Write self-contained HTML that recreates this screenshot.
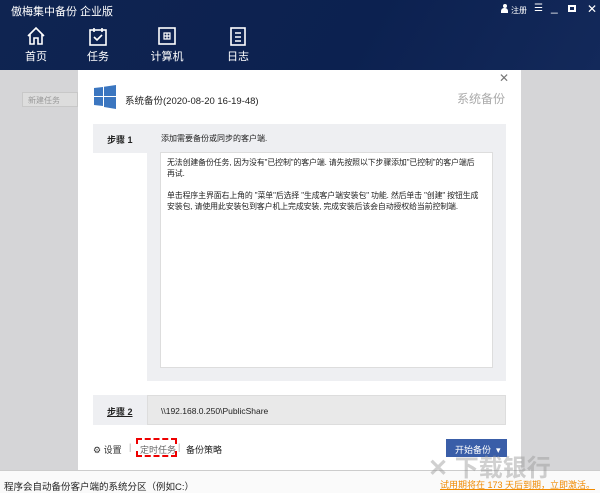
<!DOCTYPE html>
<html><head><meta charset="utf-8"><style>
*{margin:0;padding:0;box-sizing:border-box}
body{width:600px;height:493px;overflow:hidden;position:relative;background:#d5d5d7;font-family:"Liberation Sans","Noto Sans CJK SC",sans-serif;font-size:9px;color:#222}
.hdr{position:absolute;left:0;top:0;width:600px;height:70px;background:linear-gradient(120deg,#0f2451,#0c2150 60%,#13295a)}
.title{position:absolute;left:11px;top:3px;color:#fff;font-size:11px}
.nav{position:absolute;top:26px;color:#fff;font-size:11px;text-align:center;width:40px}
.nav svg{display:block;margin:0 auto 2px}
.dlg{position:absolute;left:78px;top:70px;width:443px;height:400px;background:#fff}
.status{position:absolute;left:0;top:470px;width:600px;height:23px;background:#fafafa;border-top:1px solid #ccc;font-size:9.5px;padding:8px 0 0 4px}
</style></head><body>
<div class="hdr">
<div class="title">傲梅集中备份 企业版</div>
<div style="position:absolute;right:0;top:4px;color:#fff;font-size:8px">
<span style="position:absolute;left:-99px;top:0;width:7px;height:9px"><span style="position:absolute;left:1.5px;top:0;width:4px;height:4px;border-radius:50%;background:#fff"></span><span style="position:absolute;left:0;top:4px;width:7px;height:5px;background:#fff;border-radius:3px 3px 0 0"></span></span>
<span style="position:absolute;left:-89px;top:1px">注册</span>
<span style="position:absolute;left:-66px;top:-1px;font-size:10px">☰</span>
<span style="position:absolute;left:-49px;top:-4px;font-size:12px">_</span>
<span style="position:absolute;left:-32px;top:1px;width:8px;height:7px;border:2px solid #fff"></span>
<span style="position:absolute;left:-13px;top:-2px;font-size:12px">✕</span>
</div>
<div class="nav" style="left:16px"><svg width="20" height="20" viewBox="0 0 20 20" fill="none" stroke="#fff" stroke-width="1.6"><path d="M2 10L10 2L18 10M4 8V18H8V12H12V18H16V8"/></svg>首页</div>
<div class="nav" style="left:78px"><svg width="20" height="20" viewBox="0 0 20 20" fill="none" stroke="#fff" stroke-width="1.6"><rect x="2" y="4" width="16" height="15"/><path d="M6 2V6M14 2V6M6 11L9 14L14 9"/></svg>任务</div>
<div class="nav" style="left:147px"><svg width="20" height="20" viewBox="0 0 20 20" fill="none" stroke="#fff" stroke-width="1.6"><rect x="2" y="2" width="16" height="16"/><path d="M7 7h6v6H7zM10 7v6M7 10h6" stroke-width="1.2"/></svg>计算机</div>
<div class="nav" style="left:218px"><svg width="20" height="20" viewBox="0 0 20 20" fill="none" stroke="#fff" stroke-width="1.6"><rect x="3" y="2" width="14" height="17"/><path d="M7 7h6M7 11h6M7 15h6"/></svg>日志</div>
</div>
<div style="position:absolute;left:22px;top:92px;width:56px;height:15px;border:1px solid #c8c8c8;background:#ddd;color:#999;font-size:8px;padding:2px 5px">新建任务</div>
<div class="dlg">
<div style="position:absolute;right:12px;top:1px;color:#777;font-size:12px">✕</div>
<svg style="position:absolute;left:16px;top:15px" width="22" height="24" viewBox="0 0 22 24"><path d="M0 3L9 2V11H0ZM10 1.8L22 0V11H10ZM0 12H9V21L0 20ZM10 12H22V24L10 22Z" fill="#3b76c0"/></svg>
<div style="position:absolute;left:47px;top:23px;font-size:9.5px">系统备份(2020-08-20 16-19-48)</div>
<div style="position:absolute;right:16px;top:20px;font-size:12px;color:#aaa">系统备份</div>
<div style="position:absolute;left:15px;top:54px;width:413px;height:29px;background:#eeeff2"></div>
<div style="position:absolute;left:69px;top:83px;width:359px;height:228px;background:#eeeff2"></div>
<div style="position:absolute;left:29px;top:63px;font-weight:bold;font-size:9px">步骤 1</div>
<div style="position:absolute;left:83px;top:63px;font-size:8px">添加需要备份或同步的客户端.</div>
<div style="position:absolute;left:82px;top:82px;width:333px;height:216px;background:#fff;border:1px solid #ddd;padding:4px 4px 4px 6px;font-size:7.9px;line-height:11px;letter-spacing:-0.1px;white-space:nowrap">无法创建备份任务, 因为没有"已控制"的客户端. 请先按照以下步骤添加"已控制"的客户端后<br>再试.<br><br>单击程序主界面右上角的 "菜单"后选择 "生成客户端安装包" 功能. 然后单击 "创建" 按钮生成<br>安装包, 请使用此安装包到客户机上完成安装, 完成安装后该会自动授权给当前控制端.</div>
<div style="position:absolute;left:15px;top:325px;width:55px;height:30px;background:#eeeff2"></div>
<div style="position:absolute;left:69px;top:325px;width:359px;height:30px;background:#e9e9e9;border:1px solid #ddd"></div>
<div style="position:absolute;left:29px;top:335px;font-weight:bold;text-decoration:underline;font-size:9px">步骤 2</div>
<div style="position:absolute;left:83px;top:336px;font-size:8.5px">\\192.168.0.250\PublicShare</div>
<div style="position:absolute;left:15px;top:373px;font-size:9px;color:#333">⚙ 设置</div>
<div style="position:absolute;left:51px;top:372px;font-size:9px;color:#aaa">|</div>
<div style="position:absolute;left:58px;top:368px;width:41px;height:19px;border:2px dashed #e00"></div>
<div style="position:absolute;left:62px;top:373px;font-size:9px;color:#666">定时任务</div>
<div style="position:absolute;left:100px;top:372px;font-size:9px;color:#aaa">|</div>
<div style="position:absolute;left:108px;top:373px;font-size:9px">备份策略</div>
<div style="position:absolute;left:368px;top:369px;width:61px;height:18px;background:#3a5ea8;color:#fff;font-size:9px;padding:4px 0 0 9px">开始备份 &nbsp;▾</div>
</div>
<div class="status">程序会自动备份客户端的系统分区（例如C:）<span style="position:absolute;left:440px;top:7px;color:#f08a00;font-size:9px;text-decoration:underline">试用期将在 173 天后到期，立即激活。</span></div>
<div style="position:absolute;left:428px;top:448px;font-size:24px;color:rgba(150,150,150,.45);font-weight:bold">✕ 下载银行</div>
</body></html>
